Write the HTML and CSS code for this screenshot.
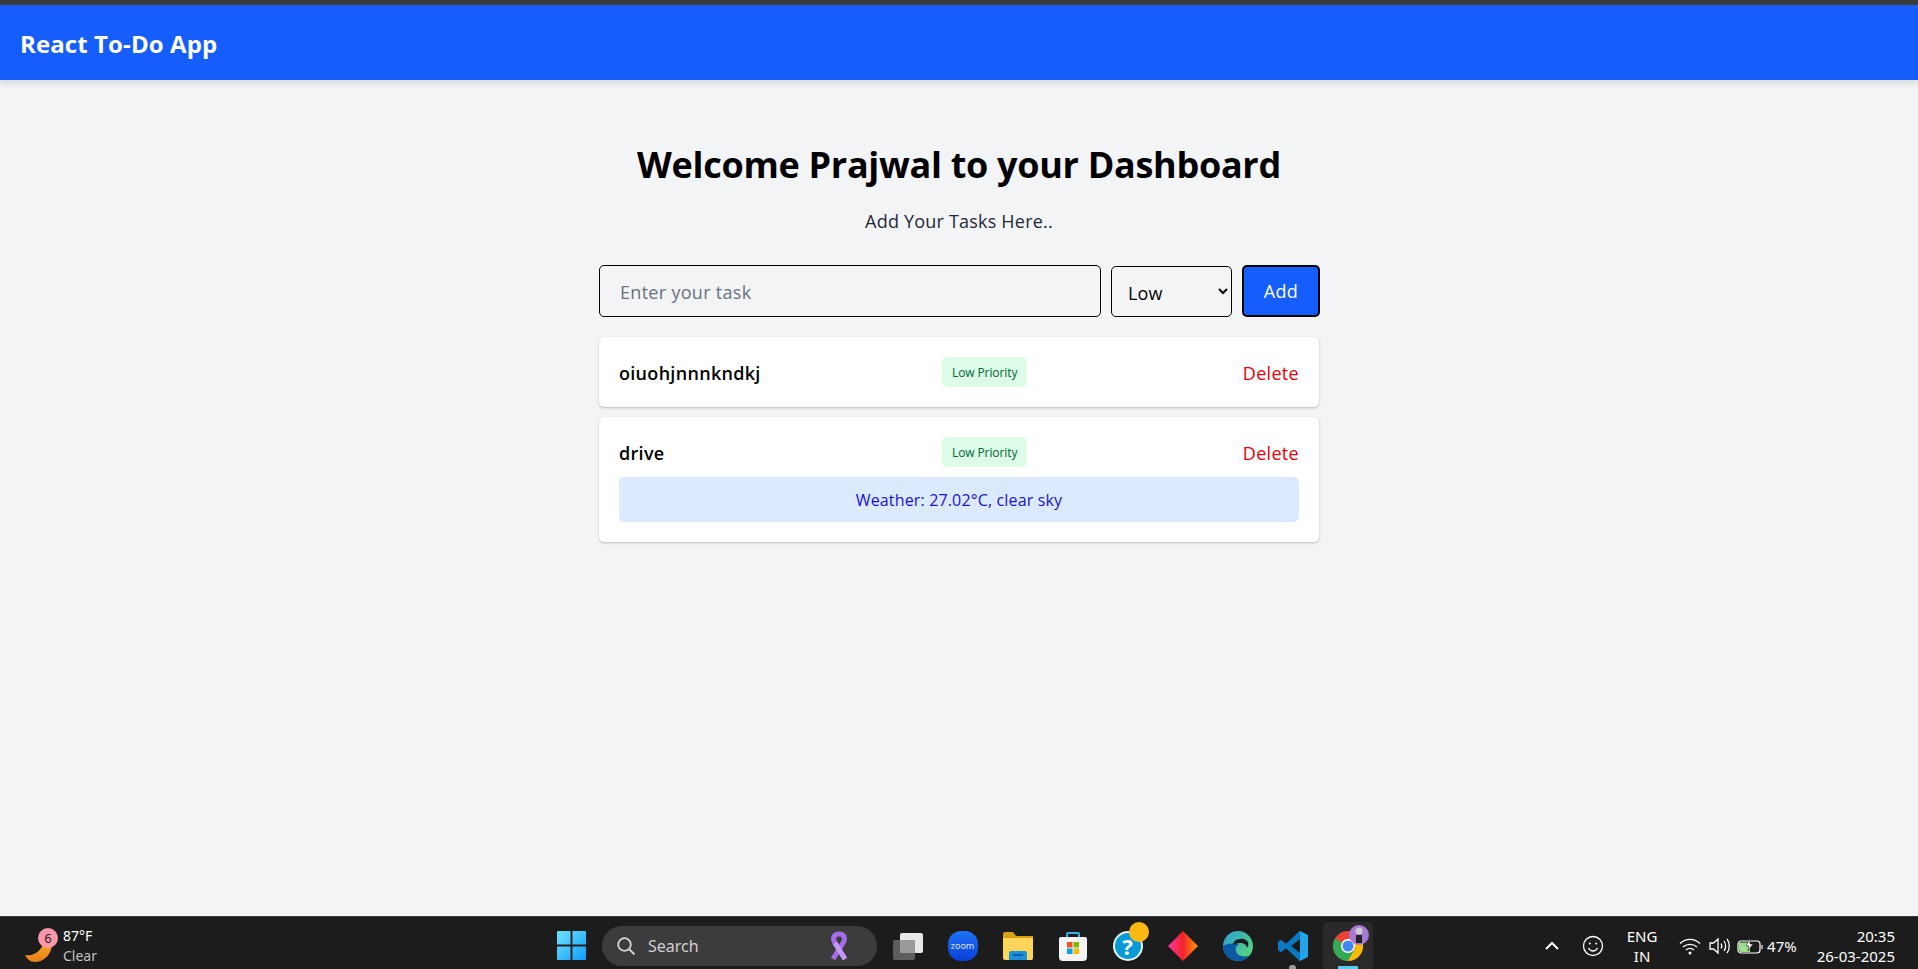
FILE: index.html
```html
<!DOCTYPE html>
<html lang="en">
<head>
  <meta charset="UTF-8">
  <title>React To-Do App</title>
  <link rel="stylesheet" href="styles.css">
</head>
<body>
  <div class="top-strip"></div>
  <nav class="navbar">
    <h2 class="brand">React To-Do App</h2>
  </nav>

  <main class="dashboard">
    <h1 class="welcome">Welcome Prajwal to your Dashboard</h1>
    <p class="subtitle">Add Your Tasks Here..</p>

    <form class="task-form">
      <input class="task-input" type="text" placeholder="Enter your task">
      <select class="task-select">
        <option>Low</option>
        <option>Medium</option>
        <option>High</option>
      </select>
      <button class="add-button" type="button">Add</button>
    </form>

    <ul class="task-list">
      <li class="task-card">
        <div class="task-row">
          <span class="task-name">oiuohjnnnkndkj</span>
          <span class="priority">Low Priority</span>
          <button class="delete-button" type="button">Delete</button>
        </div>
      </li>
      <li class="task-card">
        <div class="task-row">
          <span class="task-name">drive</span>
          <span class="priority">Low Priority</span>
          <button class="delete-button" type="button">Delete</button>
        </div>
        <div class="weather">Weather: 27.02°C, clear sky</div>
      </li>
    </ul>
  </main>

  <footer class="taskbar">
    <div class="tb-weather">
      <span class="moon">
        <svg width="30" height="26" viewBox="0 0 30 26">
          <defs><linearGradient id="moonGrad" x1="0" y1="0" x2="0" y2="1"><stop offset="0" stop-color="#f8b02c"/><stop offset="1" stop-color="#ea7f14"/></linearGradient></defs>
          <path d="M27 1C29 14 21 25 10 25 5 25 2 22 0 18 9 20 18 13 20 1Z" fill="url(#moonGrad)"/>
        </svg>
        <span class="moon-badge">6</span>
      </span>
      <span class="tb-weather-text">
        <span class="tb-temp">87°F</span>
        <span class="tb-cond">Clear</span>
      </span>
    </div>

    <div class="tb-center">
      <span class="tb-slot">
        <svg width="29" height="29" viewBox="0 0 30 30">
          <defs><linearGradient id="winGrad" x1="0" y1="0" x2="1" y2="1"><stop offset="0" stop-color="#6fe3ff"/><stop offset="1" stop-color="#0f9bfa"/></linearGradient></defs>
          <path d="M0 1a1 1 0 0 1 1-1h13v14H0ZM16 0h13a1 1 0 0 1 1 1v13H16ZM0 16h14v14H1a1 1 0 0 1-1-1ZM16 16h14v13a1 1 0 0 1-1 1H16Z" fill="url(#winGrad)"/>
        </svg>
      </span>
      <div class="tb-search">
        <svg width="20" height="20" viewBox="0 0 20 20" fill="none" stroke="#d8d8d8" stroke-width="1.8">
          <circle cx="8.5" cy="8.5" r="6.3"/><path d="M13 13l5.5 5.5"/>
        </svg>
        <span class="tb-search-text">Search</span>
        <svg class="ribbon" width="22" height="30" viewBox="0 0 22 30" fill="none" stroke-width="5">
          <path d="M5 28L15 12C18 7 16 3 11 3S4 7 7 12L17 28" stroke="#a56ee8"/>
          <path d="M7 12l10 16" stroke="#c49af5"/>
        </svg>
      </div>
      <span class="tb-slot">
        <svg width="32" height="28" viewBox="0 0 32 28">
          <rect x="1" y="8" width="22" height="20" rx="2" fill="#5d5d5d"/>
          <rect x="8" y="1" width="23" height="20" rx="2" fill="#e8e8e8"/>
          <rect x="8" y="8" width="15" height="13" fill="#9a9a9a"/>
        </svg>
      </span>
      <span class="tb-slot">
        <span class="zoom-icon">zoom</span>
      </span>
      <span class="tb-slot">
        <svg width="30" height="28" viewBox="0 0 30 28">
          <path d="M0 2a2 2 0 0 1 2-2h8l3 4h17v6H0Z" fill="#d9a010"/>
          <path d="M0 6h30v20a2 2 0 0 1-2 2H2a2 2 0 0 1-2-2Z" fill="#ffd659"/>
          <path d="M6 21a2 2 0 0 1 2-2h14a2 2 0 0 1 2 2v7H6Z" fill="#1c8fdc"/>
          <rect x="10" y="22" width="10" height="2" fill="#0c5ea8"/>
        </svg>
      </span>
      <span class="tb-slot">
        <svg width="30" height="30" viewBox="0 0 30 30" fill="none">
          <path d="M9 7V3a1 1 0 0 1 1-1h10a1 1 0 0 1 1 1v4" stroke="#33b5ea" stroke-width="2"/>
          <path d="M1 8a2 2 0 0 1 2-2h24a2 2 0 0 1 2 2v18a4 4 0 0 1-4 4H5a4 4 0 0 1-4-4Z" fill="#f4f4f4"/>
          <rect x="9" y="11" width="5.5" height="5.5" fill="#f25022"/>
          <rect x="15.5" y="11" width="5.5" height="5.5" fill="#7fba00"/>
          <rect x="9" y="17.5" width="5.5" height="5.5" fill="#00a4ef"/>
          <rect x="15.5" y="17.5" width="5.5" height="5.5" fill="#ffb900"/>
        </svg>
      </span>
      <span class="tb-slot help-slot">
        <span class="help-icon">?</span>
        <span class="help-dot"></span>
      </span>
      <span class="tb-slot">
        <svg width="30" height="30" viewBox="0 0 30 30">
          <defs><linearGradient id="gemGrad" x1="0" y1="0" x2="1" y2="0"><stop offset="0" stop-color="#f53a9c"/><stop offset=".5" stop-color="#f5222d"/><stop offset="1" stop-color="#ff9a00"/></linearGradient></defs>
          <path d="M15 0l15 15-15 15L0 15Z" fill="url(#gemGrad)"/>
        </svg>
      </span>
      <span class="tb-slot">
        <svg width="30" height="30" viewBox="0 0 30 30" fill="none">
          <defs>
            <linearGradient id="edgeGrad" x1="0" y1="0" x2="1" y2="1"><stop offset="0" stop-color="#2c9fd8"/><stop offset="1" stop-color="#5fdc6c"/></linearGradient>
          </defs>
          <circle cx="15" cy="15" r="15" fill="url(#edgeGrad)"/>
          <path d="M0 15C0 24 7 30 15 30c5 0 9-2 12-6-6 3-13 1-14-4-1-3 1-6 3-7-6-1-14 0-16 2Z" fill="#0c59a4"/>
          <path d="M17 12c4 0 7 2 7 5 4-5-1-10-7-9-4 0-7 3-7 6 1-1 4-2 7-2Z" fill="#1c1c1c"/>
        </svg>
      </span>
      <span class="tb-slot">
        <svg width="30" height="30" viewBox="0 0 30 30">
          <path d="M22 0l8 4v22l-8 4-14-13-5 4-3-2v-8l3-2 5 4Z" fill="#23a3ea"/>
          <path d="M22 0L8 13 3 9 0 11v8l3 2 5-4 14 13Z" fill="#0a78c2"/>
          <path d="M22 8L13 15l9 7Z" fill="#1c1c1c"/>
        </svg>
        <span class="pin-dot"></span>
      </span>
      <span class="tb-slot chrome-slot">
        <svg width="30" height="30" viewBox="0 0 30 30">
          <circle cx="15" cy="15" r="15" fill="#ea4335"/>
          <path d="M15 15L2 7.5A15 15 0 0 0 15 30l7.500-13Z" fill="#34a853"/>
          <path d="M15 15l7.500 2L15 30A15 15 0 0 0 28 7.500H15Z" fill="#fbbc05"/>
          <circle cx="15" cy="15" r="7" fill="#fff"/>
          <circle cx="15" cy="15" r="5.500" fill="#4285f4"/>
        </svg>
        <span class="profile-badge">
          <svg width="14" height="16" viewBox="0 0 14 16"><circle cx="7" cy="4" r="3.500" fill="#ccc"/><rect x="4" y="8" width="6" height="8" fill="#222"/></svg>
        </span>
        <span class="active-bar"></span>
      </span>
    </div>

    <div class="tb-tray">
      <svg class="tray-chevron" width="14" height="10" viewBox="0 0 14 10" fill="none" stroke="#fff" stroke-width="2"><path d="M1 8l6-6 6 6"/></svg>
      <svg class="tray-smile" width="22" height="22" viewBox="0 0 22 22" fill="none" stroke="#fff" stroke-width="1.300">
        <circle cx="11" cy="11" r="9.500"/><path d="M6.500 13c1 2 2.500 3 4.500 3s3.500-1 4.500-3"/>
        <circle cx="7.800" cy="8.500" r="1" fill="#fff" stroke="none"/><circle cx="14.200" cy="8.500" r="1" fill="#fff" stroke="none"/>
      </svg>
      <span class="tray-lang">ENG<br>IN</span>
      <svg class="tray-wifi" width="22" height="18" viewBox="0 0 22 18" fill="none" stroke="#fff" stroke-width="1.400">
        <path d="M1 6.500c6-5.500 14-5.500 20 0M4 10c4-3.500 10-3.500 14 0M7 13c2.500-2 5.500-2 8 0"/>
        <circle cx="11" cy="16" r="1.500" fill="#fff" stroke="none"/>
      </svg>
      <svg class="tray-volume" width="22" height="18" viewBox="0 0 22 18" fill="none" stroke="#fff" stroke-width="1.300">
        <path d="M1 6h3.500L9 2v14l-4.500-4H1ZM12 6.500c1 1.500 1 3.500 0 5M15 4c2 3 2 7 0 10M18 2c3 4 3 10 0 14"/>
      </svg>
      <svg class="tray-battery" width="26" height="16" viewBox="0 0 26 16" fill="none">
        <rect x="1" y="3" width="22" height="12" rx="3" stroke="#fff" stroke-width="1.200"/>
        <path d="M2 4.500h11V14H4a2 2 0 0 1-2-2Z" fill="#9fe08a"/>
        <path d="M25 7v4" stroke="#fff" stroke-width="1.200"/>
        <path d="M13 0L9 8h3l-1 5 5-7h-3Z" fill="#fff" stroke="#1c1c1c" stroke-width=".6"/>
      </svg>
      <span class="tray-percent">47%</span>
      <span class="tray-clock">20:35<br>26-03-2025</span>
    </div>
  </footer>
</body>
</html>
```

FILE: styles.css
```css
:root {
  --blue: #155dfc;
  --page: #f3f4f6;
  --bar: #1c1c1c;
}

* {
  box-sizing: border-box;
}

body {
  margin: 0;
  height: 969px;
  overflow: hidden;
  display: flex;
  flex-direction: column;
  background: var(--page);
  font-family: "Open Sans", "Noto Sans", sans-serif;
  color: #000;
}

.top-strip {
  height: 5px;
  background: #3b3b3b;
  border-bottom: 1px solid #4a4428;
}

.navbar {
  height: 75px;
  background: var(--blue);
  display: flex;
  align-items: center;
  padding: 2px 20px 0;
  box-shadow: 0 4px 6px rgba(0, 0, 0, 0.1);
}

.brand {
  margin: 0;
  color: #fff;
  font-size: 24px;
  font-weight: 700;
  letter-spacing: 0.1px;
}

.dashboard {
  flex: 1;
  width: 720px;
  margin: 0 auto;
  padding-top: 60px;
}

.welcome {
  margin: 0;
  text-align: center;
  font-size: 36px;
  line-height: 50px;
  font-weight: 700;
  letter-spacing: -0.3px;
}

.subtitle {
  margin: 18px 0 0;
  text-align: center;
  font-size: 18px;
  line-height: 26px;
  color: #1e2939;
  letter-spacing: 0.2px;
}

.task-form {
  display: flex;
  align-items: center;
  gap: 10px;
  margin: 31px -1px 0 0;
}

.task-input {
  flex: 1;
  height: 52px;
  padding: 2px 20px 0;
  background: transparent;
  border: 1px solid #000;
  border-radius: 5px;
  font: 18px "Open Sans", sans-serif;
  letter-spacing: 0.3px;
}

.task-input::placeholder {
  color: #6a7282;
}

.task-select {
  width: 121px;
  height: 51px;
  padding: 3px 12px 0;
  background: transparent;
  border: 1px solid #000;
  border-radius: 5px;
  font: 18px "Open Sans", sans-serif;
  letter-spacing: 0.2px;
  color: #000;
}

.add-button {
  width: 78px;
  height: 52px;
  background: var(--blue);
  border: 2px solid #000;
  border-radius: 5px;
  color: #fff;
  font: 18px "Open Sans", sans-serif;
  letter-spacing: 0.3px;
}

.task-list {
  list-style: none;
  margin: 20px 0 0;
  padding: 0;
  display: flex;
  flex-direction: column;
  gap: 10px;
}

.task-card {
  background: #fff;
  border-radius: 5px;
  padding: 20px;
  box-shadow: 0 1px 3px rgba(0, 0, 0, 0.15), 0 1px 2px rgba(0, 0, 0, 0.1);
}

.task-row {
  display: grid;
  grid-template-columns: 323px auto 1fr;
  align-items: center;
  height: 30px;
}

.task-name {
  padding-top: 1px;
  font-size: 18px;
  font-weight: 600;
  letter-spacing: 0.3px;
}

.priority {
  height: 30px;
  padding: 0 10px;
  display: flex;
  align-items: center;
  background: #dcfce7;
  border-radius: 5px;
  color: #016630;
  font-size: 12px;
  letter-spacing: -0.1px;
}

.delete-button {
  justify-self: end;
  padding: 1px 0 0;
  background: none;
  border: 0;
  color: #e7000b;
  font: 18px "Open Sans", sans-serif;
  letter-spacing: 0.3px;
}

.weather {
  margin-top: 10px;
  height: 45px;
  display: flex;
  align-items: center;
  justify-content: center;
  background: #dbeafe;
  border-radius: 5px;
  color: #1a0fdc;
  font-size: 16px;
  letter-spacing: 0.15px;
}

/* windows taskbar */
.taskbar {
  height: 53px;
  flex-shrink: 0;
  position: relative;
  display: flex;
  align-items: center;
  padding-top: 5px;
  background: var(--bar);
  border-top: 1px solid #3a3a3a;
  color: #fff;
  font-family: "Noto Sans", sans-serif;
}

.tb-weather {
  width: 544px;
  padding-left: 25px;
  display: flex;
  align-items: center;
  gap: 8px;
  flex-shrink: 0;
}

.moon {
  position: relative;
  width: 30px;
  height: 35px;
  display: block;
}

.moon svg {
  position: absolute;
  left: 0;
  top: 9px;
}

.moon-badge {
  position: absolute;
  left: 13px;
  top: 0;
  width: 20px;
  height: 20px;
  border-radius: 50%;
  background: #fb97a9;
  color: #222;
  font-size: 13px;
  line-height: 20px;
  text-align: center;
}

.tb-weather-text {
  display: flex;
  flex-direction: column;
  font-size: 14px;
  line-height: 20px;
}

.tb-cond {
  color: #c4c4c4;
}

.tb-center {
  display: flex;
  align-items: center;
}

.tb-slot {
  position: relative;
  width: 55px;
  height: 47px;
  display: flex;
  align-items: center;
  justify-content: center;
}

.tb-search {
  width: 275px;
  height: 40px;
  margin: 0 3px;
  padding: 0 27px 0 14px;
  display: flex;
  align-items: center;
  gap: 12px;
  background: #3c3c3c;
  border-radius: 20px;
}

.tb-search-text {
  flex: 1;
  font-size: 16px;
  color: #d0d0d0;
}

.zoom-icon {
  width: 30px;
  height: 30px;
  display: flex;
  align-items: center;
  justify-content: center;
  border-radius: 13px;
  background: linear-gradient(#1e72f5, #0b3fd8);
  font-size: 9px;
  color: #dbe7ff;
}

.help-icon {
  width: 30px;
  height: 30px;
  border-radius: 50%;
  display: flex;
  align-items: center;
  justify-content: center;
  background: #089ad6;
  border: 2px solid #e8f4f8;
  color: #fff;
  font-size: 22px;
  font-weight: 700;
}

.help-dot {
  position: absolute;
  left: 29px;
  top: 0;
  width: 20px;
  height: 20px;
  border-radius: 50%;
  background: #fdb913;
}

.pin-dot {
  position: absolute;
  left: 24px;
  bottom: 0;
  width: 7px;
  height: 4px;
  border-radius: 3px 3px 0 0;
  background: #9a9a9a;
}

.chrome-slot {
  width: 50px;
  margin-left: 3px;
  background: #2a2a2a;
  border-radius: 5px 5px 0 0;
}

.profile-badge {
  position: absolute;
  left: 26px;
  top: 3px;
  width: 20px;
  height: 20px;
  border-radius: 50%;
  background: #a878d8;
  display: flex;
  align-items: center;
  justify-content: center;
}

.active-bar {
  position: absolute;
  left: 15px;
  bottom: 0;
  width: 20px;
  height: 3px;
  background: #5cc8f5;
}

.tb-tray {
  margin-left: auto;
  padding-right: 23px;
  display: flex;
  align-items: center;
  font-size: 15px;
}

.tray-chevron {
  margin-right: 23px;
}

.tray-smile {
  margin-right: 13px;
}

.tray-lang {
  width: 50px;
  margin-right: 12px;
  text-align: center;
  line-height: 20px;
}

.tray-wifi {
  margin-right: 8px;
}

.tray-volume {
  margin-right: 6px;
}

.tray-percent {
  margin-left: 4px;
  margin-right: 20px;
}

.tray-clock {
  text-align: right;
  line-height: 20px;
}
```
